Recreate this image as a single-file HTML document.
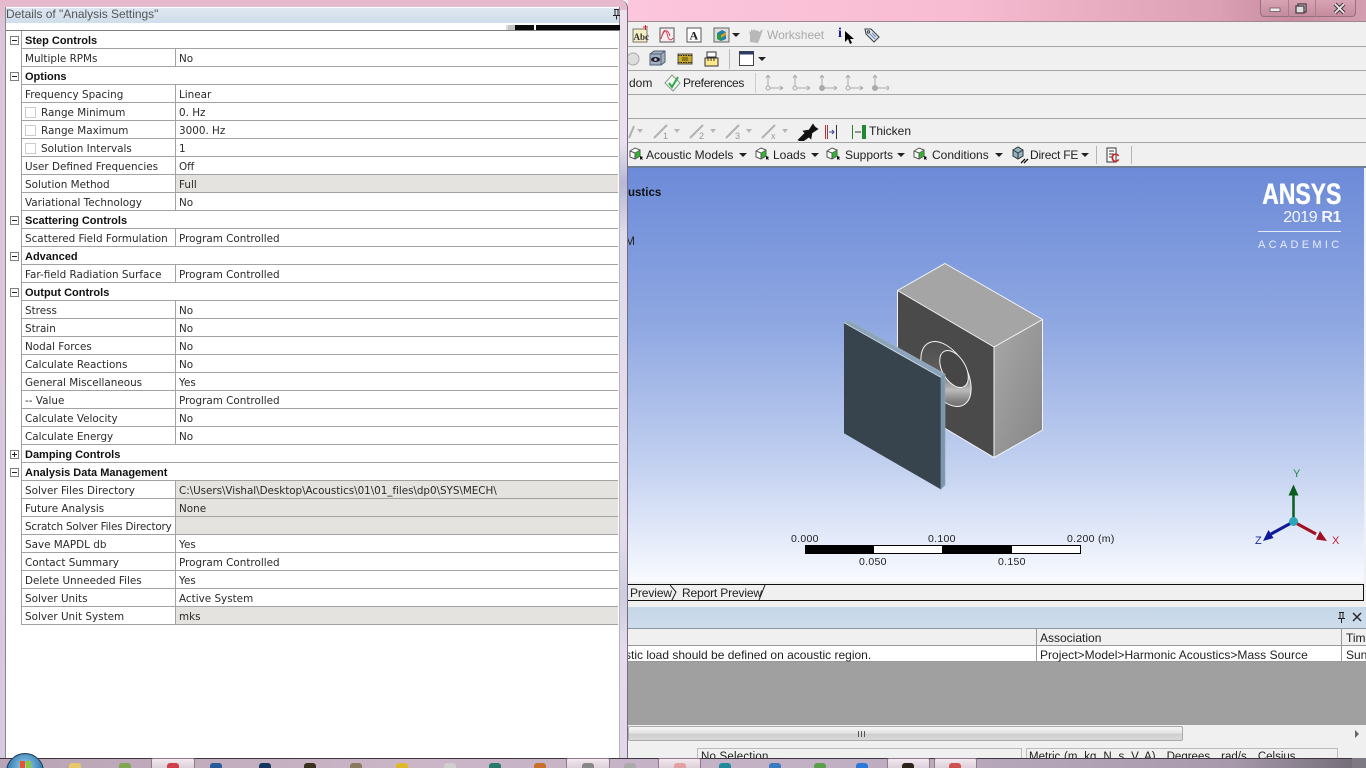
<!DOCTYPE html>
<html><head><meta charset="utf-8"><title>Details of Analysis Settings</title>
<style>
html,body{margin:0;padding:0;width:1366px;height:768px;overflow:hidden;background:#f0f0f0}
body{position:relative;font-family:"Liberation Sans",sans-serif;font-size:12px;color:#222}
.a{position:absolute;white-space:nowrap}
.sep{position:absolute;left:628px;width:738px;height:1px;background:#a5a5a5}
.vs{position:absolute;width:1px;background:#b5b5b5}
#tbl{position:absolute;left:21px;top:31px;width:597px;font:10.4px/21px "DejaVu Sans",sans-serif;color:#2a2a2a}
.r{position:relative;height:18px;box-sizing:border-box;border-bottom:1px solid #a2a2a2;border-left:1px solid #a2a2a2;white-space:nowrap}
.r u{text-decoration:none;position:absolute;left:3px;top:0}
.r u.k{left:19px}
.r s{text-decoration:none;position:absolute;left:153px;right:0;top:0;bottom:0;border-left:1px solid #a2a2a2;padding-left:3px}
.r s.g{background:#e4e3df}
.r em{position:absolute;left:3px;top:4px;width:9px;height:9px;border:1px solid #ccc;background:#fff}
.h{font:bold 11px/20px "Liberation Sans",sans-serif;letter-spacing:0;color:#111}
.h u{left:3px}
.x{position:absolute;left:10px;width:9px;height:9px;border:1px solid #7f7f7f;box-sizing:border-box;background:#fff}
.x:before{content:"";position:absolute;left:1px;top:3px;width:5px;height:1px;background:#222}
.x.p:after{content:"";position:absolute;left:3px;top:1px;width:1px;height:5px;background:#222}
.dd{position:absolute;width:0;height:0;border-left:4px solid transparent;border-right:4px solid transparent;border-top:4px solid #222}
.dg{border-top-color:#b5b5b5;border-left-width:3.5px;border-right-width:3.5px}
.tk{position:absolute;top:763px;width:12px;height:5px;border-radius:3px 3px 0 0}
.tb{position:absolute;top:758px;height:10px;box-sizing:border-box;border:1px solid #8d7b88;border-bottom:0;border-radius:2px 2px 0 0;background:linear-gradient(#f2e8ee,#dccfd9)}
</style></head><body>

<!-- main window title -->
<div class="a" style="left:628px;top:0;width:738px;height:22px;background:linear-gradient(90deg,#fcc6dc 0,#f8bcd2 45%,#dca0b4 80%,#c78c9e 90%,#d49eb0 100%)"></div>
<div class="a" style="left:628px;top:21px;width:738px;height:1px;background:#9c8a90"></div>
<div class="a" style="left:1260px;top:0;width:96px;height:17px;box-sizing:border-box;border:1px solid #96707e;border-top:0;border-radius:0 0 4px 4px;background:linear-gradient(#d8a4b4,#c48c9e)"></div>
<div class="a" style="left:1288px;top:0;width:1px;height:17px;background:#a5808c"></div>
<div class="a" style="left:1315px;top:0;width:1px;height:17px;background:#a5808c"></div>
<svg class="a" style="left:1260px;top:0" width="96" height="18" fill="none">
<rect x="10" y="8" width="10" height="3.500" fill="#eee" stroke="#6b5560" stroke-width=".8"/>
<rect x="38" y="4" width="8" height="8" stroke="#4a3a42" stroke-width="1.300" fill="#ddd"/><rect x="36" y="6" width="8" height="7" stroke="#4a3a42" stroke-width="1.300" fill="#ddd"/>
<path d="M75 4l9 9M84 4L75 13" stroke="#4a3a42" stroke-width="4"/><path d="M75 4l9 9M84 4L75 13" stroke="#e8e8e8" stroke-width="1.800"/>
</svg>

<!-- toolbars -->
<div class="sep" style="top:46px"></div><div class="sep" style="top:70px"></div><div class="sep" style="top:94px"></div><div class="sep" style="top:118px"></div><div class="sep" style="top:142px"></div>
<div class="a" style="left:628px;top:166px;width:738px;height:2px;background:#6f7d92"></div>

<svg class="a" style="left:628px;top:24px" width="270" height="22" fill="none">
<rect x="5" y="5" width="14" height="13" fill="#f5eec0" stroke="#777"/><text x="5.500" y="16" font-family="Liberation Serif" font-size="9" font-weight="bold" fill="#333">Abc</text><path d="M15 3h5M17.500 1v5" stroke="#c22"/>
<rect x="32" y="4" width="14" height="14" fill="#f8eef0" stroke="#555"/><path d="M33 15c3-12 5-10 7-2 1 3 3 4 5 1M34 12c3-8 6-6 8 0" stroke="#c45"/>
<rect x="59" y="4" width="14" height="14" fill="#fff" stroke="#555"/><text x="61.500" y="15.500" font-family="Liberation Serif" font-size="12" font-weight="bold" fill="#222">A</text>
<rect x="86" y="4" width="15" height="14" fill="#ddd" stroke="#666"/><path d="M89 9l5-3 4 2v7l-5 2-4-2z" fill="#1f7fa8"/><path d="M89 9l4 2v6l-4-2z" fill="#2d9a4a"/><path d="M93 11l5-3v3l-5 3z" fill="#d9a020"/>
<path d="M122 18v-7l-1-4 2 1V5l2 2 1-2 2 2 1-1 2 2 4-3-2 6-1 3-2 5z" fill="#b8b8b8"/>
</svg>
<div class="dd" style="left:732px;top:33px"></div>
<div class="a" style="left:767px;top:28px;color:#a8a8a8">Worksheet</div>
<div class="a" style="left:838px;top:26px;font:bold 14px 'Liberation Serif',serif;color:#1a1a9a">i</div>
<svg class="a" style="left:844px;top:30px" width="10" height="15"><path d="M1 1v11l3-3 2 5 2-1-2-4h4z" fill="#000"/></svg>
<svg class="a" style="left:863px;top:26px" width="18" height="18" fill="none"><path d="M2 3h6l8 8-5 5-8-8z" fill="#dfe9f4" stroke="#444" stroke-width="1.100"/><circle cx="5.500" cy="6" r="1.200" stroke="#444"/><path d="M7 8l5 5M9 7l4 4" stroke="#6a87b5"/></svg>

<svg class="a" style="left:628px;top:48px" width="140" height="22" fill="none">
<circle cx="5" cy="11" r="6" fill="#ddd" stroke="#aaa"/>
<path d="M22 6l4-3h11v11l-4 3H22z" fill="#9fb0c4" stroke="#55606e"/><path d="M22 6h11v11M33 6l4-3" stroke="#55606e"/>
<ellipse cx="27.500" cy="11.500" rx="4.500" ry="2.500" fill="#223"/><circle cx="27.500" cy="11.500" r="1.300" fill="#ddd"/>
<rect x="50" y="6" width="14" height="10" fill="#c9a92a" stroke="#555"/><path d="M50 7.500h14M50 14.500h14" stroke="#222" stroke-dasharray="1.500 1"/><rect x="54" y="9" width="6" height="4" fill="#8a7a20"/>
<rect x="79" y="4" width="9" height="5" fill="#fff" stroke="#333"/><rect x="77" y="10" width="13" height="8" fill="#ffe98a" stroke="#333"/><path d="M80 10v3M83 10v3M86 10v3" stroke="#333"/>
<path d="M101.500 1v20" stroke="#bbb"/>
<rect x="111.500" y="3.500" width="14" height="14" fill="#fff" stroke="#444"/><rect x="111.500" y="3.500" width="14" height="3" fill="#2c3c66"/>
</svg>
<div class="dd" style="left:758px;top:57px"></div>

<div class="a" style="left:629px;top:76px;color:#222">dom</div>
<svg class="a" style="left:664px;top:74px" width="18" height="18" fill="none"><path d="M8 1l8 8-7 8-8-8z" fill="#f3f8f0" stroke="#8a9a8a"/><path d="M5 9l3 4 6-10" stroke="#2fa84a" stroke-width="2"/></svg>
<div class="a" style="left:683px;top:76px;letter-spacing:-.33px">Preferences</div>
<svg class="a" style="left:744px;top:72px" width="145" height="22" fill="none" stroke="#aaa">
<path d="M11.500 1v20" stroke="#ccc"/>
<path d="M24 3v13h15M24 3l-2 3M24 3l2 3M39 16l-3-2M39 16l-3 2"/><circle cx="24" cy="16" r="2" fill="#eee"/>
<g transform="translate(27,0)"><path d="M24 3v13h15M24 3l-2 3M24 3l2 3M39 16l-3-2M39 16l-3 2"/><circle cx="24" cy="16" r="2" fill="#eee"/></g>
<g transform="translate(54,0)"><path d="M24 3v13h15M24 3l-2 3M24 3l2 3M39 16l-3-2M39 16l-3 2"/><circle cx="24" cy="16" r="2.500" fill="#aaa"/></g>
<g transform="translate(80,0)"><path d="M24 3v13h15M24 3l-2 3M24 3l2 3M39 16l-3-2M39 16l-3 2"/><circle cx="24" cy="16" r="2" fill="#eee"/></g>
<g transform="translate(107,0)"><path d="M24 3v13h15M24 3l-2 3M24 3l2 3M39 16l-3-2M39 16l-3 2"/><circle cx="24" cy="16" r="2.500" fill="#aaa"/></g>
</svg>

<svg class="a" style="left:628px;top:121px" width="240" height="20" fill="none" stroke="#b0b0b0" stroke-width="2">
<path d="M1 17l5-12"/><path d="M26 17l13-13M62 17l13-13M98 17l13-13M134 17l13-13"/>
<g font-family="Liberation Sans" font-size="9" fill="#999" stroke="none"><text x="35" y="18">1</text><text x="71" y="18">2</text><text x="107" y="18">3</text><text x="143" y="18">x</text></g>
<path d="M170 19l7-7-2-2 6-1 4-6 2 3 3 2-6 4-1 6-2-2-7 5z" fill="#111" stroke="#111" stroke-width=".6"/>
<path d="M197.500 4v14M199.500 4v14" stroke="#a33" stroke-width="1"/><path d="M201 11h5M204 9l2 2-2 2" stroke="#44a" stroke-width="1"/><path d="M208.500 4v14" stroke="#333" stroke-width="1"/>
<path d="M224.500 4v14" stroke="#2a7a3a" stroke-width="1"/><path d="M227 11h6" stroke="#333" stroke-width="1"/><rect x="234" y="4" width="4" height="14" fill="#1c8a2e" stroke="none"/>
</svg>
<div class="dd dg" style="left:637px;top:129px"></div><div class="dd dg" style="left:674px;top:129px"></div><div class="dd dg" style="left:710px;top:129px"></div><div class="dd dg" style="left:746px;top:129px"></div><div class="dd dg" style="left:782px;top:129px"></div>
<div class="a" style="left:869px;top:124px">Thicken</div>

<svg width="0" height="0" style="position:absolute"><symbol id="cube" viewBox="0 0 15 14"><path d="M1 4l5-3 5 2v6l-5 3-5-2z" fill="#fff" stroke="#555"/><path d="M6 6l5-3v6l-5 3z" fill="#2fb52f" stroke="#555" stroke-width=".7"/><path d="M1 4l5 2v6" fill="none" stroke="#555"/><path d="M11 9v4l1-1 2 1-1-2 1-1z" fill="#111"/></symbol></svg>
<svg class="a" style="left:629px;top:147px" width="15" height="14"><use href="#cube"/></svg>
<svg class="a" style="left:755px;top:147px" width="15" height="14"><use href="#cube"/></svg>
<svg class="a" style="left:826px;top:147px" width="15" height="14"><use href="#cube"/></svg>
<svg class="a" style="left:913px;top:147px" width="15" height="14"><use href="#cube"/></svg>
<div class="a" style="left:646px;top:148px">Acoustic Models</div><div class="dd" style="left:739px;top:153px"></div>
<div class="a" style="left:773px;top:148px">Loads</div><div class="dd" style="left:811px;top:153px"></div>
<div class="a" style="left:845px;top:148px">Supports</div><div class="dd" style="left:897px;top:153px"></div>
<div class="a" style="left:932px;top:148px">Conditions</div><div class="dd" style="left:995px;top:153px"></div>
<svg class="a" style="left:1011px;top:146px" width="18" height="18" fill="none"><path d="M2 4l5-3 5 3v6l-5 3-5-3z" fill="#8fb6c4" stroke="#333"/><path d="M2 4l5 3 5-3M7 7v6" stroke="#333"/><path d="M10 17l4-4M13 17l4-4" stroke="#111" stroke-width="1.300"/></svg>
<div class="a" style="left:1030px;top:148px;letter-spacing:-.2px">Direct FE</div><div class="dd" style="left:1081px;top:153px"></div>
<div class="vs" style="left:1096px;top:146px;height:18px"></div>
<svg class="a" style="left:1106px;top:147px" width="16" height="16"><path d="M1 1h9v14H1z" fill="#fff" stroke="#333"/><path d="M3 4h5M3 7h5M3 10h3" stroke="#333"/><text x="5" y="15" font-family="Liberation Sans" font-size="12" font-weight="bold" fill="#cc2222">C</text></svg>
<div class="vs" style="left:1131px;top:146px;height:18px"></div>

<!-- viewport -->
<div class="a" style="left:628px;top:168px;width:736px;height:414px;background:linear-gradient(#6c8ad8 0,#8fa8e2 38%,#c3d1f0 72%,#f8faff 100%)"></div>
<div class="a" style="left:628px;top:185px;font-weight:bold;font-size:11.500px;line-height:16px;color:#111">ustics</div>
<div class="a" style="left:625px;top:234px;font-size:12px;color:#222">M</div>
<div class="a" style="left:1262px;top:179px;font:bold 30px/32px 'Liberation Sans',sans-serif;color:#fff;transform:scaleX(.765);transform-origin:0 0;text-shadow:.6px 0 #fff">ANSYS</div>
<div class="a" style="right:25px;top:209px;font:16px/18px 'Liberation Sans',sans-serif;color:#f4f6ff;letter-spacing:-.4px">2019 <b>R1</b></div>
<div class="a" style="left:1258px;top:231px;width:83px;height:1px;background:#e6ebfa"></div>
<div class="a" style="left:1258px;top:239px;font:11px/13px 'Liberation Sans',sans-serif;color:#e6ebfa;letter-spacing:3.300px">ACADEMIC</div>

<svg class="a" style="left:0;top:0" width="1366" height="600" fill="none">
<defs><linearGradient id="rf" x1="0" y1="0" x2="1" y2="1"><stop offset="0" stop-color="#a8a8a8"/><stop offset="1" stop-color="#868686"/></linearGradient>
<linearGradient id="hl" x1="0" y1="0" x2=".5" y2="1"><stop offset="0" stop-color="#4a4a4a"/><stop offset=".55" stop-color="#5c5c5c"/><stop offset=".82" stop-color="#bbb"/><stop offset="1" stop-color="#777"/></linearGradient></defs>
<path d="M945 263.500L1042.500 319.500 994 347 897.500 290.500z" fill="#a5a5a5"/>
<path d="M897.500 290.500L994 347V457.500L897.500 400z" fill="#4a4a4a"/>
<path d="M994 347L1042.500 319.500V430L994 457.500z" fill="url(#rf)"/>
<path d="M945 263.500L1042.500 319.500V430L994 457.500 897.500 400V290.500zM897.500 290.500L994 347V457.500M994 347L1042.500 319.500" stroke="#f2f4fa" stroke-width="1"/>
<circle r="29" transform="matrix(.866,.5,0,1,946,374)" fill="url(#hl)" stroke="#f4f4f4" vector-effect="non-scaling-stroke"/>
<circle r="16.500" transform="matrix(.866,.5,0,1,954,369)" fill="#464646" stroke="#f4f4f4" vector-effect="non-scaling-stroke"/>
<path d="M844 322.700L848.300 320 945 374 940.700 377.300z" fill="#8ba4b9" stroke="#9db3c6" stroke-width=".6"/>
<path d="M940.700 377.300L945 374V485L940.700 489.300z" fill="#7b96ad" stroke="#8ea6ba" stroke-width=".6"/>
<path d="M844 322.700L940.700 377.300V489.300L844 433.300z" fill="#37434d"/>
<path d="M844 322.700L940.700 377.300" stroke="#dfe6ee" stroke-width=".8"/>
<!-- triad -->
<path d="M1293.500 521V494" stroke="#0b5c20" stroke-width="2.500"/><path d="M1293.500 484.500l5 11h-10z" fill="#0b5c20"/>
<path d="M1293 522l-22 12" stroke="#101a99" stroke-width="3"/><path d="M1263 541l5.500-11 5 8z" fill="#101a99"/>
<path d="M1294 522l22 12" stroke="#a01020" stroke-width="3"/><path d="M1327 541l-11-1.500 4-8.500z" fill="#a01020"/>
<circle cx="1293.500" cy="521.500" r="4.500" fill="#2aa6b8"/>
</svg>
<div class="a" style="left:1293px;top:468px;font-size:11px;color:#1f8a4a">Y</div>
<div class="a" style="left:1255px;top:535px;font-size:11px;color:#1a2aa0">Z</div>
<div class="a" style="left:1332px;top:535px;font-size:11px;color:#c02030">X</div>

<!-- scale -->
<div class="a" style="left:805px;top:545px;width:274px;height:7px;border:1px solid #000;background:#fff"></div>
<div class="a" style="left:805px;top:545px;width:69px;height:9px;background:#000"></div>
<div class="a" style="left:942px;top:545px;width:70px;height:9px;background:#000"></div>
<div class="a" style="left:791px;top:533px;font:10.500px/13px 'Liberation Sans',sans-serif;letter-spacing:.3px;color:#222">0.000</div>
<div class="a" style="left:928px;top:533px;font:10.500px/13px 'Liberation Sans',sans-serif;letter-spacing:.3px;color:#222">0.100</div>
<div class="a" style="left:1067px;top:533px;font:10.500px/13px 'Liberation Sans',sans-serif;letter-spacing:.3px;color:#222">0.200 (m)</div>
<div class="a" style="left:859px;top:556px;font:10.500px/13px 'Liberation Sans',sans-serif;letter-spacing:.3px;color:#222">0.050</div>
<div class="a" style="left:998px;top:556px;font:10.500px/13px 'Liberation Sans',sans-serif;letter-spacing:.3px;color:#222">0.150</div>

<!-- tab strip -->
<div class="a" style="left:620px;top:582px;width:746px;height:25px;background:#f0f0f0"></div>
<div class="a" style="left:620px;top:584px;width:742px;height:15px;border:1px solid #111;background:#f0f0f0"></div>
<div class="a" style="left:630px;top:586px;letter-spacing:-.1px">Preview</div>
<div class="a" style="left:682px;top:586px;letter-spacing:-.15px">Report Preview</div>
<svg class="a" style="left:670px;top:585px" width="100" height="16" fill="none" stroke="#222"><path d="M0 0l6 7-4 8M95 0l-6 15"/></svg>

<!-- message panel -->
<div class="a" style="left:628px;top:607px;width:738px;height:21px;background:linear-gradient(#c6d7e8,#cddceb)"></div>
<div class="a" style="left:628px;top:628px;width:738px;height:1px;background:#8b96a3"></div>
<svg class="a" style="left:1336px;top:611px" width="28" height="13" fill="none" stroke="#222"><path d="M3 1.500h5M4 1.500v6M7 1.500v6M2 7.500h7M5.500 8v4"/><path d="M17 2l8 8M25 2l-8 8" stroke-width="1.400"/></svg>
<div class="a" style="left:628px;top:629px;width:738px;height:17px;background:#f0f0f0;border-bottom:1px solid #999;box-sizing:border-box"></div>
<div class="a" style="left:628px;top:646px;width:738px;height:16px;background:#fff;border-bottom:1px solid #999;box-sizing:border-box"></div>
<div class="vs" style="left:1036px;top:629px;height:33px;background:#999"></div>
<div class="vs" style="left:1341px;top:629px;height:33px;background:#999"></div>
<div class="a" style="left:1040px;top:631px">Association</div>
<div class="a" style="left:1346px;top:631px">Tim</div>
<div class="a" style="left:625px;top:648px">stic load should be defined on acoustic region.</div>
<div class="a" style="left:1040px;top:648px;letter-spacing:.03px">Project&gt;Model&gt;Harmonic Acoustics&gt;Mass Source</div>
<div class="a" style="left:1346px;top:648px;width:20px;overflow:hidden">Sun</div>
<div class="a" style="left:628px;top:662px;width:738px;height:63px;background:#a0a0a0"></div>
<div class="a" style="left:628px;top:725px;width:738px;height:17px;background:#f0f0f0"></div>
<div class="a" style="left:628px;top:726px;width:555px;height:15px;box-sizing:border-box;border:1px solid #aaa;border-radius:2px;background:linear-gradient(#f6f6f6 0,#e4e4e4 45%,#cfcfcf 55%,#d8d8d8 100%)"></div>
<div class="a" style="left:858px;top:731px;width:7px;height:6px;background:repeating-linear-gradient(90deg,#555 0,#555 1px,transparent 1px,transparent 3px)"></div>
<svg class="a" style="left:1354px;top:729px" width="8" height="10"><path d="M1 1l4 4-4 4z" fill="#666"/></svg>

<!-- status -->
<div class="a" style="left:628px;top:742px;width:738px;height:16px;background:#f0f0f0"></div>
<div class="a" style="left:697px;top:748px;width:325px;height:14px;box-sizing:border-box;border:1px solid #bbb;border-bottom:0;font-size:11.500px;line-height:17px;padding-left:3px;letter-spacing:.2px;overflow:hidden">No Selection</div>
<div class="a" style="left:1026px;top:748px;width:312px;height:14px;box-sizing:border-box;border:1px solid #bbb;border-bottom:0;font-size:11.500px;line-height:17px;padding-left:2px;word-spacing:.5px;overflow:hidden">Metric (m, kg, N, s, V, A) &nbsp; Degrees &nbsp; rad/s &nbsp; Celsius</div>

<!-- details panel -->
<div class="a" style="left:0;top:0;width:628px;height:760px;box-sizing:border-box;border-right:1px solid #776a80;border-radius:0 8px 0 0;background:linear-gradient(180deg,#e8b8cc 0,#ddc5d8 3%,#d6cade 100%)"></div>
<div class="a" style="left:620px;top:10px;width:7px;height:750px;background:linear-gradient(#ece0ea 0,#e8e0ec 18%,#b4b8d6 23%,#e0dcea 30%,#e4dcea 70%,#ccccde 78%,#e4dcea 85%,#e0d8e6 100%)"></div>
<div class="a" style="left:5px;top:7px;width:615px;height:753px;background:#fff;box-sizing:border-box;border-left:1px solid #8e8494;border-right:1px solid #8e8494"></div>
<div class="a" style="left:6px;top:8px;width:613px;height:15px;background:linear-gradient(#dde7f1,#cfdeeb)"></div>
<div class="a" style="left:6px;top:7px;font:12px/15px 'Liberation Sans',sans-serif;color:#555;letter-spacing:-.03px">Details of "Analysis Settings"</div>
<svg class="a" style="left:612px;top:8px" width="10" height="12" fill="none" stroke="#222"><path d="M2 1.500h5M3 1.500v6M6 1.500v6M1 7.500h7M4.500 8v3.500"/></svg>
<div class="a" style="left:6px;top:30px;width:613px;height:1px;background:#7b7b7b"></div>
<div class="a" style="left:506px;top:25px;width:8px;height:5px;background:#ddd"></div>
<div class="a" style="left:508px;top:25px;width:7px;height:5px;background:#c4c4c4"></div>
<div class="a" style="left:515px;top:25px;width:19px;height:5px;background:#0a0a0a"></div>
<div class="a" style="left:536px;top:25px;width:84px;height:5px;background:#0a0a0a"></div>
<div class="a" style="left:619px;top:31px;width:1px;height:729px;background:#b8b8b8"></div>

<div class="x" style="top:36px"></div>
<div class="x" style="top:72px"></div>
<div class="x" style="top:216px"></div>
<div class="x" style="top:252px"></div>
<div class="x" style="top:288px"></div>
<div class="x p" style="top:450px"></div>
<div class="x" style="top:468px"></div>

<div id="tbl">
<div class="r h"><u>Step Controls</u></div>
<div class="r"><u>Multiple RPMs</u><s>No</s></div>
<div class="r h"><u>Options</u></div>
<div class="r"><u>Frequency Spacing</u><s>Linear</s></div>
<div class="r"><em></em><u class="k">Range Minimum</u><s>0. Hz</s></div>
<div class="r"><em></em><u class="k">Range Maximum</u><s>3000. Hz</s></div>
<div class="r"><em></em><u class="k">Solution Intervals</u><s>1</s></div>
<div class="r"><u>User Defined Frequencies</u><s>Off</s></div>
<div class="r"><u>Solution Method</u><s class="g">Full</s></div>
<div class="r"><u>Variational Technology</u><s>No</s></div>
<div class="r h"><u>Scattering Controls</u></div>
<div class="r"><u>Scattered Field Formulation</u><s>Program Controlled</s></div>
<div class="r h"><u>Advanced</u></div>
<div class="r"><u>Far-field Radiation Surface</u><s>Program Controlled</s></div>
<div class="r h"><u>Output Controls</u></div>
<div class="r"><u>Stress</u><s>No</s></div>
<div class="r"><u>Strain</u><s>No</s></div>
<div class="r"><u>Nodal Forces</u><s>No</s></div>
<div class="r"><u>Calculate Reactions</u><s>No</s></div>
<div class="r"><u>General Miscellaneous</u><s>Yes</s></div>
<div class="r"><u>-- Value</u><s>Program Controlled</s></div>
<div class="r"><u>Calculate Velocity</u><s>No</s></div>
<div class="r"><u>Calculate Energy</u><s>No</s></div>
<div class="r h"><u>Damping Controls</u></div>
<div class="r h"><u>Analysis Data Management</u></div>
<div class="r"><u>Solver Files Directory</u><s class="g" style="letter-spacing:-.05px">C:\Users\Vishal\Desktop\Acoustics\01\01_files\dp0\SYS\MECH\</s></div>
<div class="r"><u>Future Analysis</u><s class="g">None</s></div>
<div class="r"><u style="letter-spacing:-.2px">Scratch Solver Files Directory</u><s class="g"></s></div>
<div class="r"><u>Save MAPDL db</u><s>Yes</s></div>
<div class="r"><u>Contact Summary</u><s>Program Controlled</s></div>
<div class="r"><u>Delete Unneeded Files</u><s>Yes</s></div>
<div class="r"><u>Solver Units</u><s>Active System</s></div>
<div class="r"><u>Solver Unit System</u><s class="g">mks</s></div>
</div>

<!-- taskbar -->
<div class="a" style="left:0;top:758px;width:1366px;height:10px;background:linear-gradient(90deg,#b8a4b4,#cbb6c8 30%,#c2b0c4 60%,#a89aac 90%,#6f6a74);border-top:1px solid #3d3540;box-sizing:border-box"></div>
<div class="tb" style="left:151px;width:44px"></div>
<div class="tb" style="left:566px;width:44px"></div>
<div class="tb" style="left:658px;width:43px"></div>
<div class="tb" style="left:887px;width:43px"></div>
<div class="tb" style="left:934px;width:43px"></div>
<div class="a" style="left:6px;top:753px;width:38px;height:38px;border-radius:50%;background:radial-gradient(circle at 50% 35%,#9fd0ee,#2f7bb0 60%,#15466e);border:1px solid #1d3a55;box-sizing:border-box"></div>
<div class="a" style="left:20px;top:761px;width:5px;height:7px;background:#e8552a"></div><div class="a" style="left:26px;top:761px;width:5px;height:7px;background:#8cc63f"></div>
<div class="tk" style="left:69px;background:#e8c96a"></div>
<div class="tk" style="left:119px;background:#7fa84f"></div>
<div class="tk" style="left:167px;background:#d0404a"></div>
<div class="tk" style="left:210px;background:#2a5a9a"></div>
<div class="tk" style="left:259px;background:#15365e"></div>
<div class="tk" style="left:304px;background:#3a3020"></div>
<div class="tk" style="left:350px;background:#8c7a60"></div>
<div class="tk" style="left:396px;background:#e0b92a"></div>
<div class="tk" style="left:444px;background:#cfcfcf"></div>
<div class="tk" style="left:489px;background:#2a7a6a"></div>
<div class="tk" style="left:534px;background:#c8702a"></div>
<div class="tk" style="left:582px;background:#888"></div>
<div class="tk" style="left:624px;background:#aaa"></div>
<div class="tk" style="left:674px;background:#e2a0a0"></div>
<div class="tk" style="left:719px;background:#1f8a9a"></div>
<div class="tk" style="left:769px;background:#3a7ac0"></div>
<div class="tk" style="left:814px;background:#5aa04a"></div>
<div class="tk" style="left:856px;background:#2a78d8"></div>
<div class="tk" style="left:902px;background:#2a2418"></div>
<div class="tk" style="left:949px;background:#d05050"></div>
<div class="a" style="left:1352px;top:758px;width:14px;height:10px;background:#7e7a84"></div>
</body></html>
